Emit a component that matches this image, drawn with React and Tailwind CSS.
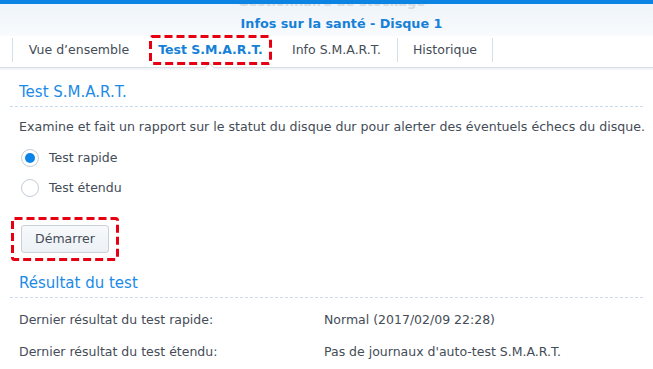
import React from "react";

const F = { fontFamily: '"DejaVu Sans", Verdana, sans-serif' };

function Dashed({ w, h }) {
  return (
    <svg width={w} height={h} className="absolute left-0 top-0 pointer-events-none">
      <rect x="1.5" y="1.5" width={w - 3} height={h - 3} rx="2" fill="none" stroke="#e60012" strokeWidth="3" strokeDasharray="8 4" />
    </svg>
  );
}

export default function App() {
  return (
    <div className="w-[653px] h-[369px] overflow-hidden bg-white text-[#444c57]" style={F}>
      <div className="h-[4px] bg-[#0b84e4]" />
      <div className="h-[32px] bg-gradient-to-b from-[#eef4fa] to-[#f9fbfd] relative">
        <div className="h-[6px] overflow-hidden flex justify-center pl-[10px]">
          <div className="text-[13px] leading-[14px] -mt-[9px] text-[#d6dade] font-bold">Gestionnaire de stockage</div>
        </div>
        <div className="flex justify-center pl-[30px] pt-[5px]">
          <div className="text-[12.75px] leading-[18px] font-bold text-[#1580d8]">Infos sur la santé - Disque 1</div>
        </div>
      </div>
      <div className="h-[32px] flex items-stretch pl-[12px] border-b border-[#d9dfe6] bg-white relative text-[12.5px]">
        <div className="w-[133px] border-l border-[#d6dee8] mt-[2px] mb-[5px] flex items-center justify-center">Vue d’ensemble</div>
        <div className="w-[131px] relative flex items-center justify-center font-bold text-[#1580d8] mt-[2px] mb-[5px]">
          Test S.M.A.R.T.
          <div className="absolute left-[61px] bottom-[-9px] w-[7px] h-[7px] rotate-45 bg-white border-l border-t border-[#d9dfe6]" />
          <div className="absolute left-[4px] top-[-3px] w-[123px] h-[30px]">
            <Dashed w={123} h={30} />
          </div>
        </div>
        <div className="w-[121px] mt-[2px] mb-[5px] flex items-center justify-center">Info S.M.A.R.T.</div>
        <div className="w-[96px] border-l border-r border-[#d6dee8] mt-[2px] mb-[5px] flex items-center justify-center">Historique</div>
      </div>
      <div className="h-[3px] bg-gradient-to-b from-[#eef0f3] to-white" />
      <div className="mx-[10px] mt-[11px] pl-[9px] pb-[3px] border-b border-dashed border-[#c9dcee] text-[15px] leading-[21px] text-[#1c8ae6]">Test S.M.A.R.T.</div>
      <div className="pl-[19px] mt-[11px] text-[12.6px] leading-[18px]">Examine et fait un rapport sur le statut du disque dur pour alerter des éventuels échecs du disque.</div>
      <div className="pl-[21px] mt-[13px] flex items-center h-[18px] text-[12.5px]">
        <div className="w-[18px] h-[18px] rounded-full border border-[#c3ccd6] bg-white flex items-center justify-center">
          <div className="w-[10px] h-[10px] rounded-full bg-[#0a84e6]" />
        </div>
        <span className="ml-[10px]">Test rapide</span>
      </div>
      <div className="pl-[21px] mt-[12px] flex items-center h-[18px] text-[12.5px]">
        <div className="w-[18px] h-[18px] rounded-full border border-[#c3ccd6] bg-white" />
        <span className="ml-[10px]">Test étendu</span>
      </div>
      <div className="ml-[11px] mt-[20px] relative w-[108px] h-[44px] flex items-center justify-center">
        <Dashed w={108} h={44} />
        <div className="w-[88px] h-[28px] rounded-[3px] border border-[#c7d1dc] bg-gradient-to-b from-[#f7f9fb] to-[#edf1f5] flex items-center justify-center text-[12.5px]">Démarrer</div>
      </div>
      <div className="mx-[10px] mt-[12px] pl-[9px] pb-[3px] border-b border-dashed border-[#c9dcee] text-[15px] leading-[21px] text-[#1c8ae6]">Résultat du test</div>
      <div className="pl-[19px] mt-[13px] flex text-[12.5px] leading-[18px]">
        <div className="w-[305px]">Dernier résultat du test rapide:</div>
        <div>Normal (2017/02/09 22:28)</div>
      </div>
      <div className="pl-[19px] mt-[14px] flex text-[12.5px] leading-[18px]">
        <div className="w-[305px]">Dernier résultat du test étendu:</div>
        <div>Pas de journaux d'auto-test S.M.A.R.T.</div>
      </div>
    </div>
  );
}
